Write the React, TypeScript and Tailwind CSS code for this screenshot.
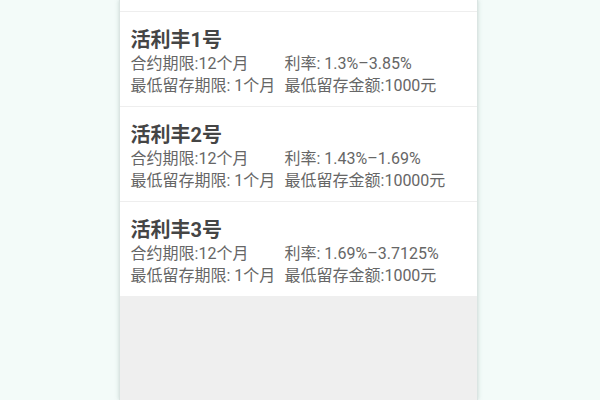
import React from 'react';

interface Product {
  name: string;
  term: string;
  rate: string;
  minTerm: string;
  minAmount: string;
}

const products: Product[] = [
  { name: '活利丰1号', term: '12个月', rate: '1.3%–3.85%', minTerm: '1个月', minAmount: '1000元' },
  { name: '活利丰2号', term: '12个月', rate: '1.43%–1.69%', minTerm: '1个月', minAmount: '10000元' },
  { name: '活利丰3号', term: '12个月', rate: '1.69%–3.7125%', minTerm: '1个月', minAmount: '1000元' },
];

function ProductRow({ p, last }: { p: Product; last: boolean }) {
  return (
    <div className={`pl-[11px] pt-[16px] pb-[9px] ${last ? '' : 'border-b border-[#eeeeee]'}`}>
      <div className="text-[20px] leading-[25px] font-bold text-[#454545]">{p.name}</div>
      <div className="flex text-[16px] leading-[22px] text-[#666666]">
        <div className="w-[154px] shrink-0">合约期限:{p.term}</div>
        <div>利率: {p.rate}</div>
      </div>
      <div className="flex text-[16px] leading-[22px] text-[#666666]">
        <div className="w-[154px] shrink-0">最低留存期限: {p.minTerm}</div>
        <div>最低留存金额:{p.minAmount}</div>
      </div>
    </div>
  );
}

export default function App() {
  return (
    <div
      className="w-[600px] h-[400px] bg-[#f3fbf9] flex justify-center overflow-hidden"
      style={{ fontFamily: "Roboto, 'Noto Sans CJK SC', sans-serif" }}
    >
      <div className="ml-[-4px] w-[359px] h-full flex flex-col bg-[#efefef] border-x border-[#dbe5e3] shadow-[0_0_4px_rgba(120,150,145,0.35)]">
        <div className="bg-white">
          <div className="h-[12px] border-b border-[#eeeeee]" />
          {products.map((p, i) => (
            <ProductRow key={p.name} p={p} last={i === products.length - 1} />
          ))}
        </div>
        <div className="flex-1" />
      </div>
    </div>
  );
}
